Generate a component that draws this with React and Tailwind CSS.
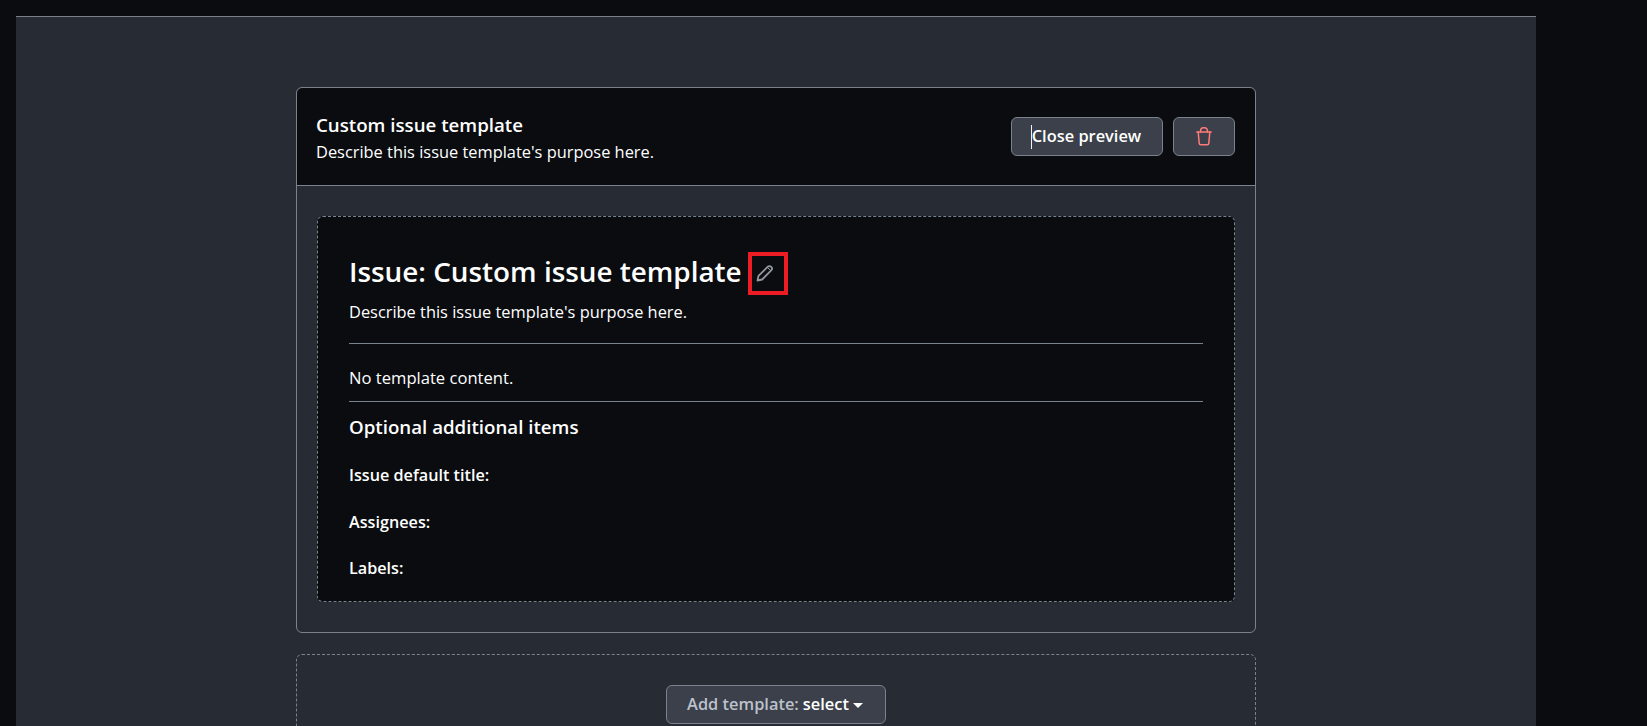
const FONT = "font-['Open_Sans','Noto_Sans',sans-serif]"

function TrashIcon() {
  return (
    <svg width="16" height="19" viewBox="0 0 16 19" fill="none" stroke="currentColor" strokeWidth="1.5" strokeLinecap="round" strokeLinejoin="round">
      <path d="M0.8 5h14.4" />
      <path d="M2.2 5l1 11.4a1.5 1.5 0 0 0 1.5 1.4h6.6a1.5 1.5 0 0 0 1.5-1.4l1-11.4" />
      <path d="M4.6 5V3.6A2.8 2.8 0 0 1 7.4 0.8h1.2a2.8 2.8 0 0 1 2.8 2.8V5" />
    </svg>
  )
}

function PencilIcon() {
  return (
    <svg className="mb-0.5 mr-[6px]" width="18" height="18" viewBox="0 0 18 18" fill="none" stroke="currentColor" strokeWidth="1.8" strokeLinejoin="round" strokeLinecap="round">
      <path d="M1.5 16.5l1-4.6 9.1-9.1a2.4 2.4 0 0 1 3.6 3.6l-9.1 9.1z" />
      <path d="M11.4 3.4l3.2 3.2" strokeWidth="1" />
    </svg>
  )
}

function TemplateHeader() {
  return (
    <div className="flex h-[98px] items-center justify-between rounded-t-md border-b border-[#7a828e] bg-[#0a0c10] pl-[19px] pr-5">
      <div className="pt-1">
        <div className="text-[18.7px] leading-6 font-semibold text-white">Custom issue template</div>
        <div className="mt-[3px] text-[16.4px] leading-[24px] text-white">Describe this issue template's purpose here.</div>
      </div>
      <div className="flex items-center gap-2.5">
        <button className="flex h-[39px] w-[152px] items-center justify-center rounded-md border border-[#7a828e] bg-[#3b404a] pr-0.5 text-[16.4px] font-semibold text-white">
          <span className="h-6 w-px bg-[#f0f3f6]" />
          Close preview
        </button>
        <button className="flex h-[39px] w-[62px] items-center justify-center rounded-md border border-[#7a828e] bg-[#3b404a] text-[#ff7b7a]">
          <TrashIcon />
        </button>
      </div>
    </div>
  )
}

function Preview() {
  return (
    <div className="rounded-md border border-dashed border-[#7a828e] bg-[#0a0c10] px-[30px] pt-[33px] text-white">
      <div className="flex h-[42px] items-start pl-px">
        <h1 className="mt-0.5 text-[27.85px] leading-[38px] font-semibold text-white">Issue: Custom issue template</h1>
        <span className="ml-[6px] mt-0.5 flex h-[43px] w-[40px] shrink-0 items-center justify-center border-4 border-[#ed1c24] text-[#92979f]">
          <PencilIcon />
        </span>
      </div>
      <p className="mt-2 pl-px text-[16.4px] leading-6">Describe this issue template's purpose here.</p>
      <hr className="mx-px mt-[19px] border-[#7a828e]" />
      <p className="mt-[22px] pl-px text-[16.6px] leading-6">No template content.</p>
      <hr className="mx-px mt-[11px] border-[#7a828e]" />
      <h3 className="mt-[11px] pl-px text-[18.7px] leading-7 font-semibold text-white">Optional additional items</h3>
      <div className="mt-[22px] pl-px text-[16.2px] leading-6 font-semibold text-white">Issue default title:</div>
      <div className="mt-[23px] pl-px text-[16.2px] leading-6 font-semibold text-white">Assignees:</div>
      <div className="mt-[22px] pb-[21px] pl-px text-[16.2px] leading-6 font-semibold text-white">Labels:</div>
    </div>
  )
}

export default function App() {
  return (
    <div className={`h-[726px] w-[1647px] overflow-hidden bg-[#0a0c10] pl-4 pt-4 ${FONT}`}>
      <div className="h-[800px] w-[1520px] border-t border-[#7a828e] bg-[#272b33] pt-[70px]">
        <div className="ml-[280px] w-[960px]">
          <div className="rounded-md border border-[#7a828e]">
            <TemplateHeader />
            <div className="p-5 pb-[30px] pt-[30px]">
              <Preview />
            </div>
          </div>
          <div className="mt-[21px] flex h-[120px] justify-center rounded-md border border-dashed border-[#7a828e] pt-[30px]">
            <button className="flex h-[39px] w-[220px] items-center justify-center rounded-md border border-[#7a828e] bg-[#3b404a] pr-0.5 text-[16.4px] font-semibold text-[#bcc2cc]">
              Add template:
              <span className="ml-1 text-white">select</span>
              <span className="ml-1 mt-0.5 h-0 w-0 border-x-[5px] border-t-[5px] border-x-transparent border-t-white" />
            </button>
          </div>
        </div>
      </div>
    </div>
  )
}
